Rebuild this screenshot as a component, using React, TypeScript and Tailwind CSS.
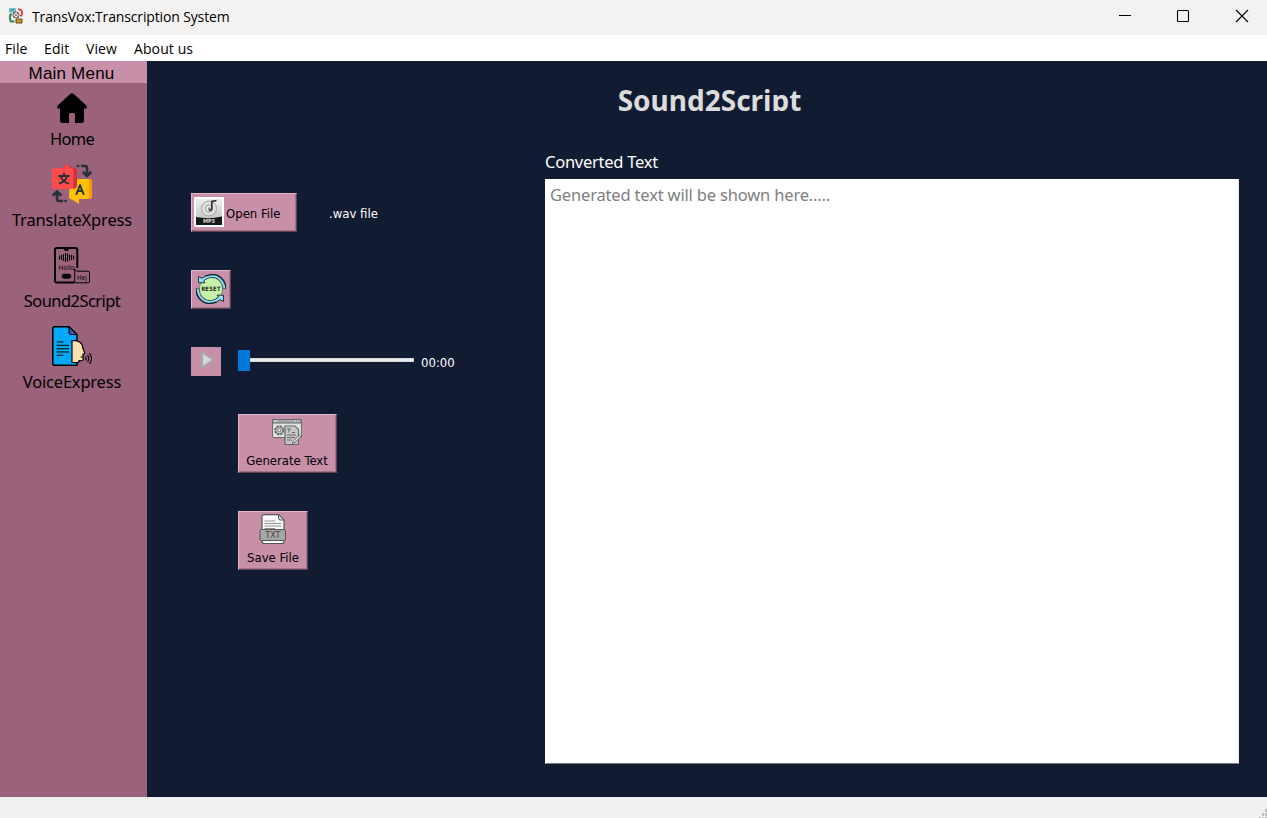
import React from "react";

const UI = "font-['DejaVu_Sans_Condensed','DejaVu_Sans',sans-serif] [font-stretch:condensed]";
const LARGE = "font-['Noto_Sans','Open_Sans',sans-serif] [font-stretch:normal]";
const SEGOE = "font-['Open_Sans','Noto_Sans',sans-serif] [font-stretch:normal]";
const BUTTON =
  "bg-[#c88fa9] border border-t-[#e6b5ca] border-l-[#e6b5ca] border-r-[#64424f] border-b-[#64424f] shadow-[inset_-1px_-1px_0_#a0728a] text-black text-[13px]";

function AppIcon() {
  return (
    <svg width="16" height="16" viewBox="0 0 16 16" fill="none">
      <rect x="1" y="0" width="7" height="4.500" rx="1" fill="#67c2cf" />
      <path d="M10 1.500h1.500c2.500.5 3 3 2.300 5l-1.500 1.800" stroke="#dc4a43" strokeWidth="2" />
      <path d="M3.500 5.500C1.500 7.500 1.500 11 3 13.500h3.500" stroke="#32875d" strokeWidth="2.200" />
      <circle cx="8" cy="7" r="3" fill="#fff" stroke="#5c5048" strokeWidth="1" />
      <path d="M5 4.500l6 5M6 9l4-4M3 2h3" stroke="#665448" strokeWidth=".8" />
      <path d="M8 11h6v4H8z" fill="#c4942c" stroke="#654c25" />
    </svg>
  );
}

function HomeIcon() {
  return (
    <svg width="40" height="40" viewBox="0 0 40 40">
      <path
        d="M18.2 11.1q1.8-1.8 3.6 0l12.5 11.3q.9.8.6 1.9-.3 1.3-1.6 1.4H32v11.8q0 2.5-2.5 2.5H23v-8.2q0-1.8-1.8-1.8h-2.4q-1.8 0-1.8 1.8V40h-6.5Q8 40 8 37.500V25.700H6.700q-1.300-.1-1.600-1.400-.3-1.100.6-1.900z"
        fill="#000"
      />
    </svg>
  );
}

function TranslateIcon() {
  return (
    <svg width="40" height="40" viewBox="0 0 40 40" fill="none">
      <path d="M18 15h19q3 0 3 3v14q0 3-3 3H27v5l-7-4.500q-3 0-3-3z" fill="#ffc107" />
      <path d="M36 15h1q3 0 3 3v14q0 3-3 3h-3q3 0 3-3V18q0-3-1-3z" fill="#ff9800" />
      <path d="M12 0l9 4h1q3 0 3 3v14q0 3-3 4l-10-8z" fill="#d52e33" />
      <path d="M3 4h9.500V0L19 4q2.500 0 2.500 3v15q0 3-3 3H3q-3 0-3-3V7q0-3 3-3z" fill="#ff4b4e" />
      <g stroke="#263238" strokeWidth="1.800" strokeLinecap="round" strokeLinejoin="round">
        <path d="M7 12h10M12 9.500V12M15 12q-1 5-7.500 7.500M9 13q2 5 7.500 6.500" />
        <path d="M24.500 30l3.500-9 3.500 9M26 27h4" strokeWidth="2" />
        <path d="M26 2h.1M30 2h3q2 0 2 2v7M31.500 8.500L35 12l3.500-3.500" strokeWidth="2.600" />
        <path d="M13.500 37h.1M10 37H7q-2 0-2-2v-7M1.500 31L5 27.500 8.500 31" strokeWidth="2.600" />
      </g>
    </svg>
  );
}

function SoundIcon() {
  return (
    <svg width="40" height="40" viewBox="0 0 40 40" fill="none" stroke="#000">
      <path d="M25.300 23V5q0-2-2-2H5Q3 3 3 5v30.500q0 2 2 2h17" strokeWidth="2" />
      <path d="M12 3.500h5l-1 2h-3z" fill="#000" strokeWidth=".8" />
      <path d="M7.500 10.500v4M9.500 10v5M11.500 9v7M13.500 8v9M15.500 8.500v8M17.500 9.500v6M19.500 10v5M21.500 10.500v4" strokeWidth="1.100" />
      <rect x="10" y="29" width="9" height="4.500" rx="2.200" fill="#000" strokeWidth=".5" />
      <path d="M22.700 37.800V24l2 2.200H36q1.500 0 1.500 1.500v8.600q0 1.500-1.500 1.500z" fill="#9a637b" strokeWidth="1" />
      <text x="14.500" y="25" fontSize="6.500" textAnchor="middle" textLength="16" lengthAdjust="spacingAndGlyphs" fill="#000" stroke="none" fontFamily="DejaVu Sans">Hello</text>
      <text x="30" y="34.500" fontSize="7" textAnchor="middle" textLength="10" lengthAdjust="spacingAndGlyphs" fill="#000" stroke="none" fontFamily="DejaVu Sans">Hej</text>
    </svg>
  );
}

function VoiceIcon() {
  return (
    <svg width="40" height="40" viewBox="0 0 40 40" fill="none" stroke="#000">
      <path d="M2.500.8H17L25 8.500v30.800H2.500Q.8 39.300.8 37.500V2.500Q.8.800 2.500.8z" fill="#03a9f4" strokeWidth="1.500" />
      <path d="M17 1v5.500q0 2 2 2h6z" fill="#3f51b5" strokeWidth="1" />
      <path d="M4.500 16h7M4.500 19.300h12.500M4.500 22.700h12.500M4.500 26h12.500M4.500 29.300h7" strokeWidth="1.100" />
      <path d="M20 14.700c6-.8 10.500 2 10.700 7l2 5.300q.3 1-1.700 1.200l.2 5.300q-.2 1.500-4.200 1.200l-.4 1.800H20z" fill="#ffe0b2" strokeWidth="1.200" />
      <path d="M28.500 31h3M33.500 30.300q1.300 2 0 4M35.500 28.800q2.700 3.500 0 7M37.500 27q4 5.500 0 11" strokeWidth="1.100" />
    </svg>
  );
}

function Mp3Icon() {
  return (
    <svg className="mb-px shrink-0" width="30" height="30" viewBox="0 0 30 30" fill="none">
      <defs>
        <linearGradient id="silver" x1="0" y1="0" x2="0" y2="1">
          <stop offset="0" stopColor="#eee" />
          <stop offset="1" stopColor="#c8c8c8" />
        </linearGradient>
      </defs>
      <path d="M0 0h30v30H0z" fill="#fff" />
      <path d="M2 2h26v19H2z" fill="url(#silver)" />
      <circle cx="15" cy="11.500" r="7.500" fill="#e0e0e0" stroke="#999" strokeWidth=".8" />
      <circle cx="15" cy="11.500" r="3.500" fill="#eee" stroke="#888" strokeWidth=".8" />
      <circle cx="15" cy="11.500" r="1.200" fill="#888" />
      <path d="M17.800 12.500V4.500l4.700-1" stroke="#2a2a2a" strokeWidth="1.600" />
      <ellipse cx="16.500" cy="13" rx="1.900" ry="1.300" fill="#555" />
      <path d="M2 20q13 2.500 26-.5V28H2z" fill="#181818" />
      <text x="15" y="26.300" textAnchor="middle" fontSize="5.500" fontWeight="bold" textLength="12" lengthAdjust="spacingAndGlyphs" fill="#ddd" fontFamily="DejaVu Sans">MP3</text>
    </svg>
  );
}

function ResetIcon() {
  return (
    <svg className="mb-px shrink-0" width="30" height="30" viewBox="0 0 30 30" fill="none">
      <circle cx="15" cy="15" r="11.700" fill="#c5f2a8" stroke="#33474b" strokeWidth=".6" />
      <path d="M9.500 3.500Q20-1.500 26.500 7q2.500 4 2 8M20.500 26.500Q10 31.500 3.500 23 1 19 1.500 14" stroke="#10262e" strokeWidth="3.600" />
      <path d="M2.500 2.500v6.300h6.500L7.500 7l4-3-1.500-2.200-4 2.500zM27.500 27.500v-6.300H21l1.500 1.800-4 3 1.500 2.200 4-2.500z" fill="#8edff7" stroke="#10262e" strokeWidth=".9" />
      <path d="M9 4Q20-1 26 7.500q2.500 4 2.300 7M21 26Q10 31 4 22.500 1.500 18.500 1.700 14.500" stroke="#8edff7" strokeWidth="1.900" />
      <text x="15" y="17.200" textAnchor="middle" fontSize="6" fontWeight="bold" textLength="19" lengthAdjust="spacing" fill="#111" fontFamily="DejaVu Sans Mono">RESET</text>
    </svg>
  );
}

function GenerateIcon() {
  return (
    <svg className="shrink-0" width="30" height="30" viewBox="0 0 30 30" fill="none" stroke="#686868">
      <path d="M.6 2.500h28.800v18H.6z" fill="#e2e2e2" />
      <path d="M.6 2.500h28.800v3.500H.6z" fill="#a8a8a8" />
      <path d="M23 4.200h1M25.500 4.200h1M2 4.200h3" stroke="#eee" />
      <circle cx="7.300" cy="13.300" r="4.300" strokeWidth="1.600" strokeDasharray="2.200 1.170" />
      <circle cx="7.300" cy="13.300" r="3.500" fill="#d8d8d8" />
      <circle cx="7.300" cy="13.300" r="1.500" fill="#fff" />
      <path d="M13 9h10l3.500 3.500v15H13z" fill="#c8c8c8" strokeWidth="1.200" />
      <path d="M15 12h4M17 12v3.500M20 15.500h3M15 18h9M15 20.500h8M15 23h5" strokeWidth="1" />
      <path d="M20.500 26.500l1-3 6-5.500 1.500 1.800-6 5.500z" fill="#ddd" />
    </svg>
  );
}

function TxtIcon() {
  return (
    <svg className="shrink-0" width="30" height="30" viewBox="0 0 30 30" fill="none" stroke="#555">
      <path d="M6 .6h14.500L26 6v21.500q0 2-2 2H6q-2 0-2-2v-25Q4 .6 6 .6z" fill="#fafafa" strokeWidth="1.200" />
      <path d="M20.500.6V4q0 2 2 2H26z" fill="#ddd" />
      <path d="M6.500 7h10.500M6.500 9.500h17M6.500 12h17M6.500 14.500h10.500" stroke="#909090" />
      <rect x="2" y="15.500" width="25.500" height="11" rx="1.500" fill="#a6a6a6" />
      <text x="14.800" y="24" textAnchor="middle" fontSize="8" textLength="15" lengthAdjust="spacingAndGlyphs" fill="#444" stroke="none" fontFamily="DejaVu Sans">TXT</text>
    </svg>
  );
}

function MenuItem({ icon, label, cls }: { icon: React.ReactNode; label: string; cls: string }) {
  return (
    <button className="flex h-[81px] w-full flex-col items-center pr-[3px]">
      {icon}
      <span className={`h-8 whitespace-nowrap text-[16.500px] leading-8 text-black ${LARGE} ${cls}`}>{label}</span>
    </button>
  );
}

export default function App() {
  return (
    <div className={`flex h-[818px] w-[1267px] flex-col overflow-hidden bg-[#111b32] ${UI}`}>
      <header className={`flex h-[35px] shrink-0 items-center bg-[#f3f2f1] pb-[3px] pl-2 text-black ${SEGOE}`}>
        <AppIcon />
        <span className="ml-2 text-[14px] tracking-[-0.14px]">TransVox:Transcription System</span>
        <svg className="ml-auto mr-[17px]" width="132" height="14" viewBox="0 0 132 14" fill="none" stroke="#000">
          <path d="M1 6.500h12" />
          <rect x="59.500" y="1.500" width="11" height="11" rx="1" strokeWidth="1.100" />
          <path d="M118 1l12 12M130 1l-12 12" strokeWidth="1.100" />
        </svg>
      </header>
      <nav className={`flex h-[26px] shrink-0 items-center bg-white pl-[5px] text-[14px] tracking-[0.1px] text-black ${SEGOE}`}>
        <span className="w-[39px]">File</span>
        <span className="w-[42px]">Edit</span>
        <span className="w-12">View</span>
        <span>About us</span>
      </nav>
      <div className="flex h-[736px] shrink-0">
        <aside className="w-[147px] shrink-0 bg-[#9a637b]">
          <h2 className="h-[22px] bg-[#c88fa9] pr-1 pt-px text-center font-['Liberation_Sans',Arial,sans-serif] text-[17px] leading-[23px] tracking-[0.2px] text-black">
            Main Menu
          </h2>
          <MenuItem icon={<HomeIcon />} label="Home" cls="tracking-[-0.7px]" />
          <MenuItem icon={<TranslateIcon />} label="TranslateXpress" cls="tracking-[-0.15px]" />
          <MenuItem icon={<SoundIcon />} label="Sound2Script" cls="tracking-[-0.55px]" />
          <MenuItem icon={<VoiceIcon />} label="VoiceExpress" cls="tracking-[-0.2px]" />
        </aside>
        <main className="flex min-w-0 flex-1 flex-col">
          <h1 className={`mt-[23px] h-[27px] overflow-hidden pl-[5px] text-center text-[28px] font-bold leading-[33px] text-[#dcdcdc] ${LARGE}`}>
            Sound2Script
          </h1>
          <div className="flex pl-[44px]">
            <section className="flex w-[354px] shrink-0 flex-col items-start pt-[82px] text-[13px] text-white">
              <div className="flex items-center">
                <button className={`flex h-[39px] w-[106px] items-center pl-[2px] ${BUTTON}`}>
                  <Mp3Icon />
                  <span className="ml-[2px] whitespace-nowrap pt-0.5">Open File</span>
                </button>
                <span className="ml-[32px] pt-0.5">.wav file</span>
              </div>
              <button className={`mt-[38px] flex h-[39px] w-10 items-center justify-center ${BUTTON}`}>
                <ResetIcon />
              </button>
              <div className="mt-[38px] flex h-[29px] items-center">
                <button className="flex h-[29px] w-[30px] items-start justify-center bg-[#c88fa9] pl-[3px] pt-[3px]">
                  <svg width="15" height="19" viewBox="0 0 15 19">
                    <path d="M2 2l11.500 7.800L2 17.500z" fill="#d6d6d6" stroke="#aaa6a8" strokeWidth="2" strokeLinejoin="round" />
                  </svg>
                </button>
                <div className="mb-[2px] ml-[17px] flex h-[21px] w-44 items-start">
                  <div className="h-[21px] w-3 bg-[#0078d7]" />
                  <div className="mt-2 h-1 flex-1 border border-[#d6d6d6] bg-[#e7eaea]" />
                </div>
                <span className="ml-[7px] pt-0.5">00:00</span>
              </div>
              <button className={`ml-[47px] mt-[38px] flex h-[59px] w-[99px] flex-col items-center pr-px pt-0.5 ${BUTTON}`}>
                <GenerateIcon />
                <span className="shrink-0 whitespace-nowrap leading-[27px]">Generate Text</span>
              </button>
              <button className={`ml-[47px] mt-[38px] flex h-[59px] w-[70px] flex-col items-center pt-0.5 ${BUTTON}`}>
                <TxtIcon />
                <span className="shrink-0 whitespace-nowrap leading-[27px]">Save File</span>
              </button>
            </section>
            <section className={`w-[694px] pt-10 text-[16.500px] ${LARGE}`}>
              <label className="block h-7 leading-[22px] tracking-[-0.25px] text-white">Converted Text</label>
              <textarea
                className="block h-[585px] w-[694px] resize-none border border-b-[#7a7a7a] border-l-white border-r-[#e3e3e3] border-t-white bg-white px-1 py-1 leading-[22px] tracking-[-0.17px] outline-none placeholder:text-[#808080]"
                placeholder="Generated text will be shown here....."
              />
            </section>
          </div>
        </main>
      </div>
      <footer className="flex h-[21px] shrink-0 items-end justify-end bg-[#f0f0f0]">
        <svg width="8" height="9" viewBox="0 0 8 9" fill="#bfbfbf">
          <path d="M6 0h2v3H6zM3 4h2v3H3zM6 4h2v3H6zM0 8h2v1H0zM3 8h2v1H3zM6 8h2v1H6z" />
        </svg>
      </footer>
    </div>
  );
}
